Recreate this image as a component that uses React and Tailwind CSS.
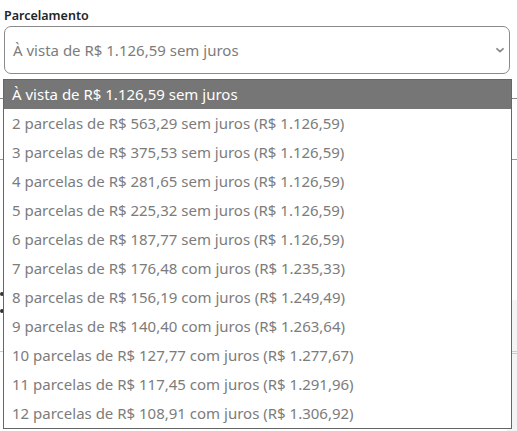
const options = [
  "À vista de R$ 1.126,59 sem juros",
  "2 parcelas de R$ 563,29 sem juros (R$ 1.126,59)",
  "3 parcelas de R$ 375,53 sem juros (R$ 1.126,59)",
  "4 parcelas de R$ 281,65 sem juros (R$ 1.126,59)",
  "5 parcelas de R$ 225,32 sem juros (R$ 1.126,59)",
  "6 parcelas de R$ 187,77 sem juros (R$ 1.126,59)",
  "7 parcelas de R$ 176,48 com juros (R$ 1.235,33)",
  "8 parcelas de R$ 156,19 com juros (R$ 1.249,49)",
  "9 parcelas de R$ 140,40 com juros (R$ 1.263,64)",
  "10 parcelas de R$ 127,77 com juros (R$ 1.277,67)",
  "11 parcelas de R$ 117,45 com juros (R$ 1.291,96)",
  "12 parcelas de R$ 108,91 com juros (R$ 1.306,92)",
];

export default function App() {
  return (
    <div
      className="relative h-[431px] w-[517px] overflow-hidden bg-white text-[#212529]"
      style={{ fontFamily: '"Noto Sans", "Open Sans", sans-serif' }}
    >
      <div className="px-[4px] pt-[7px]">
        <label className="block text-[12.5px] font-semibold leading-[18px]">Parcelamento</label>
        <div className="mt-[1px] flex h-[48px] w-[506px] items-center justify-between rounded-[7px] border border-[#8a8a8a] pl-[8px] pr-[3px]">
          <span className="text-[15px] text-[#7c7c7c]">À vista de R$ 1.126,59 sem juros</span>
          <svg width="12" height="12" viewBox="0 0 12 12" className="text-[#8a8a8a]">
            <path d="M3 4.8 6 7.6l3-2.8" fill="none" stroke="currentColor" strokeWidth="1.8" strokeLinecap="round" strokeLinejoin="round" />
          </svg>
        </div>
      </div>

      {/* content hidden behind the open list */}
      <div className="mt-[24px] border-t border-[#888]" />
      <div className="mt-[60px] border-t border-[#999]" />
      <div className="mt-[132px] flex flex-col gap-[13px]">
        <span className="h-[4px] w-[4px] rounded-full bg-[#333]" />
        <span className="h-[4px] w-[4px] rounded-full bg-[#333]" />
      </div>
      <div className="absolute bottom-0 right-0 top-[300px] w-[10px] bg-[#f3f4f6]">
        <div className="mt-[53px] border-t border-[#ccc]" />
      </div>
      <div className="absolute left-0 right-0 top-[351px] border-t border-[#ccc]" />

      <ul className="absolute left-[3px] top-[79px] w-[509px] border border-[#666] bg-white">
        {options.map((opt, i) => (
          <li
            key={opt}
            className={
              i === 0
                ? "h-[29px] bg-[#767676] pl-[8px] text-[15px] leading-[29px] text-white"
                : "h-[29px] pl-[8px] text-[15px] leading-[29px] text-[#7c7c7c]"
            }
          >
            {opt}
          </li>
        ))}
      </ul>
    </div>
  );
}
